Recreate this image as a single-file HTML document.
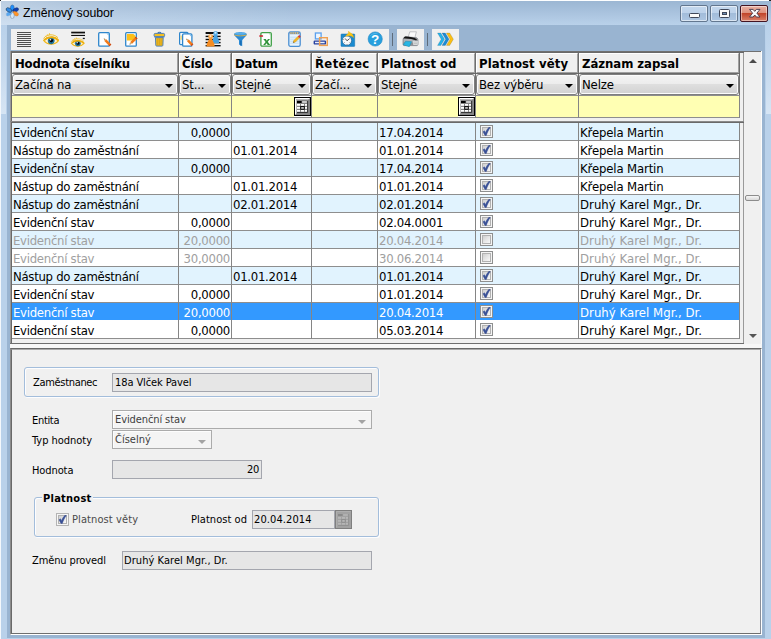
<!DOCTYPE html><html lang="cs"><head><meta charset="utf-8"><title>Změnový soubor</title><style>
*{box-sizing:border-box;margin:0;padding:0}
html,body{width:771px;height:639px;overflow:hidden}
body{position:relative;background:#b9d1ea;font-family:"DejaVu Sans Condensed", "Liberation Sans", sans-serif;font-size:13px;color:#000;line-height:1}
.a{position:absolute}
.t{position:absolute;white-space:nowrap}
#client{left:7px;top:25px;width:758px;height:613px;background:#99b4d1}
#title{left:0;top:0;width:771px;height:25px;background:linear-gradient(to right,rgba(255,255,255,.32) 0,rgba(255,255,255,.12) 120px,rgba(255,255,255,0) 300px),linear-gradient(#9ab5d2 0,#a3bdd9 30%,#b9d1ea 100%)}
#topw{left:0;top:0;width:771px;height:1px;background:#fdfeff}
#leftw{left:0;top:0;width:1px;height:639px;background:#f4f8fc}
#fl{left:1px;top:25px;width:6px;height:614px;background:#b9d1ea}
#fr{left:765px;top:25px;width:6px;height:614px;background:#b9d1ea}
#fb{left:0;top:638px;width:771px;height:1px;background:#b9d1ea}
#ttl{left:23px;top:6px;font-family:"Liberation Sans","DejaVu Sans",sans-serif;font-size:12.3px;line-height:15px;color:#000;letter-spacing:-.05px}
.cb{top:5px;height:17px;border:1px solid #63778f;border-radius:2px;background:linear-gradient(#c3d7ed 0,#bdd2ea 48%,#a2bcda 50%,#adc6e2 100%);box-shadow:inset 0 0 0 1px rgba(255,255,255,.55)}
#cbx{border-color:#431422;background:linear-gradient(#e9b1a3 0,#dd8f7b 48%,#c2452a 50%,#d98069 100%);box-shadow:inset 0 0 0 1px rgba(255,255,255,.45)}
.tb{top:29px;height:21px;background:#f0f0f0}
.tsep{top:33px;width:1px;height:13px;background:#5f6c7a}
.ico{position:absolute;top:31px;width:16px;height:16px}
/* grid */
.pn{background:#f0f0f0}
.hc{top:53px;height:20px;background:#f0f0f0;border-left:1px solid #fff;border-top:1px solid #fff;border-right:1px solid #a0a0a0;border-bottom:1px solid #a0a0a0}
.hc span{position:absolute;left:2px;top:2px;font-weight:bold;font-size:13px;line-height:16px;white-space:nowrap;letter-spacing:-.2px}
.fc{top:74px;height:21px;border:1px solid #7f7f7f;border-radius:3px;background:linear-gradient(#f4f4f4 0,#ececec 47%,#dedede 50%,#d2d2d2 100%);box-shadow:inset 0 0 0 1px #fcfcfc}
.fc span{position:absolute;left:2px;top:2px;font-size:13px;line-height:16px;white-space:nowrap;letter-spacing:-.15px}
.fc i{position:absolute;right:4px;top:9px;width:0;height:0;border-left:4px solid transparent;border-right:4px solid transparent;border-top:4px solid #000}
.yc{top:96px;height:21px;background:#ffffb3}
.vl{width:1px;background:#858585}
.hl{height:1px;background:#8e8e8e}
.row{left:12px;width:727px;height:17px}
.row span{position:absolute;top:1px;font-size:13px;line-height:17px;white-space:nowrap;letter-spacing:-.28px}
.alt{background:#e1f3fe}
.sel{background:#3399ff;color:#fff}
.dis{color:#a0a0a0}
.ck{position:absolute;left:468px;top:2px;width:13px;height:13px;border:1px solid #8e8f8f;background:#f4f4f4}
.ck b{position:absolute;left:1px;top:1px;width:9px;height:9px;border:1px solid #b2b2b2;background:linear-gradient(135deg,#cfcfcf 0,#e6e6e6 50%,#f8f8f8 100%)}
.ck svg{position:absolute;left:1px;top:1px;width:9px;height:9px}
/* bottom */
.lb{font-family:"DejaVu Sans Condensed", "Liberation Sans", sans-serif;font-size:11px;line-height:13px;letter-spacing:-.32px}
.fld{height:19px;border:1px solid #a4a6ae;background:#e6e6e6}
.fld span,.cmb span{position:absolute;left:3px;top:2px;font-size:11px;line-height:13px;white-space:nowrap;letter-spacing:-.32px}
.cmb span{top:2px}
.cmb{height:19px;border:1px solid #ababab;background:#f4f4f4;color:#404040;box-shadow:inset 1px 1px 0 #fdfdfd}
.cmb i{position:absolute;right:5px;top:9px;width:0;height:0;border-left:4px solid transparent;border-right:4px solid transparent;border-top:4px solid #a3a3a3}
.gb{border:1px solid #a3bddb;border-radius:3px;box-shadow:inset 1px 1px 0 #fdfdfe, 1px 1px 0 #fdfdfe}
</style></head><body>
<div class="a" id="title"></div><div class="a" id="client"></div>
<div class="a" id="fl"></div><div class="a" id="fr"></div><div class="a" id="fb"></div>
<div class="a" style="left:1px;top:25px;width:5px;height:89px;background:linear-gradient(#b9d1ea 0,#c4d8ed 45%,#d6e5f4 100%)"></div><div class="a" style="left:766px;top:25px;width:5px;height:89px;background:linear-gradient(#b9d1ea 0,#c4d8ed 45%,#d6e5f4 100%)"></div>
<div class="a" id="topw"></div><div class="a" id="leftw"></div>
<div class="a" style="left:0;top:0;width:1px;height:1px;background:#222"></div><div class="a" style="left:769px;top:0;width:2px;height:1px;background:#222"></div>
<svg class="a" style="left:5px;top:4px" width="15" height="15" viewBox="0 0 15 15">
<g transform="translate(7.3,7.8)">
<ellipse cx="0" cy="-3.8" rx="1.9" ry="3.1" fill="#1e90ff" stroke="#3a5f8a" stroke-width=".5"/>
<ellipse cx="0" cy="-3.8" rx="1.9" ry="3.1" fill="#0c3fb0" stroke="#1b2f6a" stroke-width=".5" transform="rotate(62)"/>
<ellipse cx="0" cy="-3.8" rx="1.9" ry="3.1" fill="#ff9326" stroke="#c77a30" stroke-width=".4" transform="rotate(120)"/>
<ellipse cx="0" cy="-3.8" rx="1.9" ry="3.1" fill="#d4e9fb" stroke="#6d7f92" stroke-width=".5" transform="rotate(180)"/>
<ellipse cx="0" cy="-3.8" rx="1.9" ry="3.1" fill="#5aa8f0" stroke="#8fb2d8" stroke-width=".4" transform="rotate(240)"/>
<ellipse cx="0" cy="-3.8" rx="1.9" ry="3.1" fill="#2f8ae6" stroke="#23405f" stroke-width=".6" transform="rotate(298)"/>
</g></svg>
<div class="t" id="ttl">Změnový soubor</div>
<div class="a cb" style="left:680px;width:28px"><svg class="a" style="left:8px;top:7px" width="11" height="5"><rect x=".5" y=".5" width="10" height="4" rx="1" fill="#fbfbfb" stroke="#40485a"/></svg></div>
<div class="a cb" style="left:710px;width:28px"><svg class="a" style="left:8px;top:3px" width="11" height="9"><rect x=".5" y=".5" width="10" height="8" rx="1" fill="#fbfbfb" stroke="#40485a"/><rect x="3.5" y="3.5" width="4" height="2" fill="#6f8db3" stroke="#40485a"/></svg></div>
<div class="a cb" id="cbx" style="left:740px;width:28px"><svg class="a" style="left:7px;top:2px" width="13" height="11" viewBox="0 0 13 11"><path d="M1.5 1.400H5.100L6.750 3.400 8.400 1.400H12L8.900 5.200 12 9H8.400L6.750 7 5.100 9H1.500L4.600 5.200z" fill="#fafafa" stroke="#43384a" stroke-width=".9" stroke-linejoin="round"/></svg></div>
<div class="a tb" style="left:11px;width:378px"></div><div class="a tb" style="left:397px;width:27px"></div><div class="a tb" style="left:432px;width:27px"></div>
<div class="a tsep" style="left:392px"></div><div class="a tsep" style="left:427px"></div>
<svg class="ico" style="left:16px" viewBox="0 0 16 16"><rect x="1" y="1" width="14" height="1" fill="#4f4f4f"/><rect x="1" y="3" width="14" height="1" fill="#4f4f4f"/><rect x="1" y="5" width="14" height="1" fill="#4f4f4f"/><rect x="1" y="7" width="14" height="1" fill="#4f4f4f"/><rect x="1" y="9" width="14" height="1" fill="#4f4f4f"/><rect x="1" y="11" width="14" height="1" fill="#4f4f4f"/><rect x="1" y="13" width="14" height="1" fill="#4f4f4f"/><rect x="1" y="15" width="14" height="1" fill="#4f4f4f"/></svg>
<svg class="ico" style="left:43px" viewBox="0 0 16 16"><path d="M0.700 9.400C3 7 6 6.200 8.600 6.400c3 .2 5.400 1.400 6.900 3.200-2 2.400-4.500 3.600-7.100 3.600-3.200 0-5.900-1.300-7.700-3.800z" fill="#fbf3d8" stroke="#efb71a" stroke-width="1.200"/>
<path d="M0.500 7.500C2.500 4.500 6 3.300 9.500 3.900c2.400.4 4.300 1.500 5.500 2.900" fill="none" stroke="#f3c234" stroke-width="1"/>
<path d="M2.500 4.900l1.100 1.700M4.300 3.400l.9 1.900M6.400 2.200l.3 2.100" fill="none" stroke="#f1bd2a" stroke-width=".9"/>
<circle cx="8.200" cy="9.800" r="3.100" fill="#1d7fac"/><circle cx="8.200" cy="9.800" r="3.100" fill="none" stroke="#14597c" stroke-width=".6"/>
<circle cx="8.300" cy="9.600" r="1.800" fill="#07070c"/><circle cx="7.500" cy="8.700" r=".8" fill="#fff"/>
<path d="M1.300 8.900C4 6.600 7 6 9.400 6.300c2.400.3 4.300 1.400 5.800 3" fill="none" stroke="#efb00e" stroke-width="2"/></svg>
<svg class="ico" style="left:70px" viewBox="0 0 16 16"><rect x="1.200" y="0.700" width="13.800" height="1.700" fill="#111"/><rect x="1.200" y="3.900" width="13.800" height="1.100" fill="#111"/><rect x="12.800" y="6.800" width="2" height="1.300" fill="#222"/><g transform="translate(.8,4.700) scale(.86,.8)"><path d="M0.700 9.400C3 7 6 6.200 8.600 6.400c3 .2 5.400 1.400 6.900 3.200-2 2.400-4.500 3.600-7.100 3.600-3.200 0-5.900-1.300-7.700-3.800z" fill="#fbf3d8" stroke="#efb71a" stroke-width="1.200"/>
<path d="M0.500 7.500C2.500 4.500 6 3.300 9.500 3.900c2.400.4 4.300 1.500 5.500 2.900" fill="none" stroke="#f3c234" stroke-width="1"/>
<path d="M2.500 4.900l1.100 1.700M4.300 3.400l.9 1.900M6.400 2.200l.3 2.100" fill="none" stroke="#f1bd2a" stroke-width=".9"/>
<circle cx="8.200" cy="9.800" r="3.100" fill="#1d7fac"/><circle cx="8.200" cy="9.800" r="3.100" fill="none" stroke="#14597c" stroke-width=".6"/>
<circle cx="8.300" cy="9.600" r="1.800" fill="#07070c"/><circle cx="7.500" cy="8.700" r=".8" fill="#fff"/>
<path d="M1.300 8.900C4 6.600 7 6 9.400 6.300c2.400.3 4.300 1.400 5.800 3" fill="none" stroke="#efb00e" stroke-width="2"/></g></svg>
<svg class="ico" style="left:97px" viewBox="0 0 16 16"><rect x="1.700" y="1.700" width="10.600" height="13.500" rx="1" fill="#fff" stroke="#2f86cc" stroke-width="1.300"/><path d="M9.400 2.400h2.200v2.200z" fill="#79bdf0"/><path d="M9.27 8.27 L14.33 13.49 L12.47 15.31 L7.40 10.08 z" fill="#f27a1a"/><path d="M6.80 7.60 L9.27 8.27 L7.40 10.08 z" fill="#d9b27a"/><path d="M6.80 7.60 L7.80 7.88 L7.05 8.61 z" fill="#3a2a20"/><path d="M13.50 12.63 L14.33 13.49 L12.47 15.31 L11.63 14.44 z" fill="#c8451a"/></svg>
<svg class="ico" style="left:124px" viewBox="0 0 16 16"><rect x="1.700" y="1.700" width="10.600" height="13.500" rx="1" fill="#fff" stroke="#2f86cc" stroke-width="1.300"/><path d="M2.900 2.900h6.600l2 2v4.700H2.900z" fill="#fbc01c"/><path d="M9.600 2.400h2v2.200z" fill="#bfe0f8"/><path d="M6.27 10.93 L11.69 5.67 L13.51 7.53 L8.08 12.80 z" fill="#f27a1a"/><path d="M5.60 13.40 L6.27 10.93 L8.08 12.80 z" fill="#d9b27a"/><path d="M5.60 13.40 L5.88 12.40 L6.61 13.15 z" fill="#3a2a20"/><path d="M10.83 6.50 L11.69 5.67 L13.51 7.53 L12.65 8.37 z" fill="#c8451a"/></svg>
<svg class="ico" style="left:151px" viewBox="0 0 16 16"><path d="M6.900 2.200c.2-1.300 2.800-1.300 3 0" fill="none" stroke="#3f76b5" stroke-width="1.100"/><rect x="3.100" y="2.400" width="10.500" height="3.300" rx="1.100" fill="#f6c01f" stroke="#3f76b5" stroke-width=".9"/><rect x="3.300" y="5.400" width="10.100" height="1.100" fill="#4a7fc0"/><path d="M4.500 6.700h7.700l-.3 7.600c0 .5-.4.800-.9.800H5.700c-.5 0-.9-.3-.9-.8z" fill="#f3bb1e" stroke="#3f76b5" stroke-width=".9" stroke-linejoin="round"/><path d="M6.700 7.400v6.800M8.400 7.400v6.800M10.100 7.400v6.800" stroke="#cf9d1c" stroke-width=".8"/></svg>
<svg class="ico" style="left:178px" viewBox="0 0 16 16"><rect x="1.600" y="1.400" width="8.400" height="12.200" rx="1" fill="#f3f9fe" stroke="#2f86cc" stroke-width="1.200"/><rect x="2.500" y="4.600" width="1.200" height="4.200" fill="#f7d35a"/><rect x="4.600" y="2.900" width="9.300" height="12.200" rx="1.200" fill="#fff" stroke="#2f86cc" stroke-width="1.300"/><path d="M11.200 3.600h2v2.200z" fill="#79bdf0"/><path d="M10.82 8.55 L15.31 13.35 L13.49 15.05 L8.99 10.26 z" fill="#f27a1a"/><path d="M8.40 7.80 L10.82 8.55 L8.99 10.26 z" fill="#d9b27a"/><path d="M8.40 7.80 L9.38 8.11 L8.65 8.80 z" fill="#3a2a20"/><path d="M14.49 12.47 L15.31 13.35 L13.49 15.05 L12.67 14.18 z" fill="#c8451a"/></svg>
<svg class="ico" style="left:205px" viewBox="0 0 16 16"><rect x=".6" y="1" width="15" height="2" fill="#0c0c0c"/><rect x=".6" y="4.7" width="15" height="1.400" fill="#0c0c0c"/><rect x=".6" y="7.8" width="15" height="1.400" fill="#0c0c0c"/><rect x=".6" y="10.9" width="15" height="1.400" fill="#0c0c0c"/><rect x=".6" y="14" width="15" height="1.400" fill="#0c0c0c"/><circle cx="10.600" cy="2.400" r="2.300" fill="#5ab0e8"/><path d="M9.100 4C9.100 6 7.400 8 7.300 12.200h6.900C14.200 8 12.100 6 12.100 4z" fill="#4aa3e0"/><circle cx="10.500" cy="1.800" r="1" fill="#d6ecfa"/><circle cx="5.600" cy="5.700" r="2.400" fill="#f9a03a"/><path d="M4.100 7.400C4.100 9.400 1.600 11.400 1.500 15.400h8.200C9.600 11.400 7.100 9.400 7.100 7.400z" fill="#f68d22"/><circle cx="5.500" cy="5.100" r="1.100" fill="#fee6c8"/></svg>
<svg class="ico" style="left:232px" viewBox="0 0 16 16"><path d="M2 3.200c0-1.300 2.900-2 6.400-2s6.400.7 6.400 2c0 1.500-3.900 4.700-4.600 6.200v5.800l-3.200-1.600V9.400C6.200 7.900 2 4.700 2 3.200z" fill="#2b8ad6"/><ellipse cx="8.400" cy="2.700" rx="5.600" ry="1.100" fill="#58b0ec"/><path d="M2.300 3.900c2.200 1.300 10 1.300 12.200 0" fill="none" stroke="#d8b04a" stroke-width="1"/><path d="M8.800 9.600v5" stroke="#1b6db4" stroke-width="1.500"/></svg>
<svg class="ico" style="left:259px" viewBox="0 0 16 16"><rect x="1.900" y="1.600" width="10.400" height="13.600" rx="1.200" fill="#fff" stroke="#3fa047" stroke-width="1.300"/><path d="M9.600 2.300h2v2.200z" fill="#9ad3a0"/><path d="M4.300 8h2.500l1 1.700 1.200-1.700h2l-2.200 2.800 2.400 3.300h-2.500l-1.100-1.900-1.400 1.900h-2l2.400-3.200z" fill="#2f9239"/><rect x=".3" y="4.200" width="3.800" height="1.600" rx=".4" fill="#cf1f2a"/></svg>
<svg class="ico" style="left:286px" viewBox="0 0 16 16"><rect x="2.800" y=".9" width="11.400" height="14.400" rx="1.600" fill="#e8f4fd" stroke="#4a8fd2" stroke-width="1.300"/><rect x="3.600" y="1.200" width="9.800" height="2" fill="#7b8da8"/><path d="M5 1.300v1.600M7.200 1.300v1.600M9.400 1.300v1.600M11.600 1.300v1.600" stroke="#f1d36a" stroke-width=".9"/><path d="M4.200 6.200h8.600M4.200 8.200h8.600M4.200 10.200h8.600M4.200 12.200h8.600" stroke="#b3d8f5" stroke-width=".8"/><path d="M7.200 11.700l.6-2.200 4-4 1.600 1.600-4 4z" fill="#f7b81e" stroke="#c98a12" stroke-width=".4"/><path d="M11.800 5.500l.9-.9c.4-.4.900-.3 1.200 0l.5.500c.3.300.3.800 0 1.100l-.9.900z" fill="#d63a33"/><path d="M7.200 11.700l.4-1.300.9.900z" fill="#3b3b3b"/></svg>
<svg class="ico" style="left:313px" viewBox="0 0 16 16"><rect x="2.400" y="2" width="5.700" height="5.900" fill="#eef6fe" stroke="#5aa0ee" stroke-width="1.300"/><rect x="1.300" y="10.100" width="11.100" height="2.800" rx=".5" fill="#e9eefa" stroke="#2741a0" stroke-width="1.400"/><rect x="6.600" y="6.700" width="7.700" height="7.700" fill="none" stroke="#f0a050" stroke-width="1.400"/></svg>
<svg class="ico" style="left:340px" viewBox="0 0 16 16"><rect x="1" y="3" width="13.700" height="12.400" rx=".6" fill="#1b8bd0" stroke="#1672ae" stroke-width=".5"/><circle cx="6.900" cy="9.600" r="4.700" fill="#f7f9fb" stroke="#1a5f90" stroke-width=".7"/><path d="M7 9.800l-1.800-2.300M7 9.800l2.600-2.200" stroke="#333" stroke-width=".8" fill="none"/><path d="M3.200 8.400l1 .2M7 13v.9M4 11.900l.7-.5M10.200 12l-.6-.6" stroke="#555" stroke-width=".6"/><path d="M5.400 5.300c.8-1.500 2-2.400 3-2.900l.1-2.300 1.700 1.700c1.900.5 3.400 2.500 3.600 5.300-.9-1.300-2-2-3.300-2.200-1.900-.2-3.500.1-5.100.4z" fill="#fcc512" stroke="#dba414" stroke-width=".3"/></svg>
<svg class="ico" style="left:367px" viewBox="0 0 16 16"><circle cx="8.200" cy="8" r="7.100" fill="#27a0de"/><path d="M2.400 5.600a6.300 6.300 0 0 1 9-2.800c-3.500-.4-6.500.7-9 2.800z" fill="#5bbcec" opacity=".8"/><circle cx="8.200" cy="8" r="7.100" fill="none" stroke="#1c86c6" stroke-width=".6"/><text x="8.200" y="12.600" text-anchor="middle" font-family="Liberation Sans,DejaVu Sans,sans-serif" font-weight="bold" font-size="13.500" fill="#fff">?</text></svg>
<svg class="ico" style="left:402px;width:17px" viewBox="0 0 17 16"><path d="M6 6.600L7.800 .8h6.600l-1.600 6z" fill="#fbfbfb" stroke="#9da1a6" stroke-width=".6"/><path d="M1 9.200c0-1.900 1-3.200 2.600-3.400l10.200.8c1.400.2 2.200 1.200 2.200 2.600v3.900c0 .9-.6 1.500-1.400 1.500H2.400c-.9 0-1.400-.6-1.400-1.500z" fill="#aeb2b7" stroke="#666a70" stroke-width=".6"/><path d="M1.500 7.500c.5-1.400 1.300-2 2.700-2 3.600 0 7.700.9 10.700 2.500l-.5 1.500C11 8.100 6.300 7.300 1.500 7.500z" fill="#141414"/><path d="M1.200 11.500h14.600v1.700c0 .9-.6 1.400-1.400 1.400H2.600c-.9 0-1.400-.5-1.400-1.400z" fill="#8b8f95"/><path d="M11.200 10h4.500v3.800h-4.500z" fill="#eceded"/><path d="M11.700 11h3.500M11.700 12.400h3.500" stroke="#9a9da1" stroke-width=".6"/><path d="M3.600 10.200l6 .5-2.300 5-6-1.900z" fill="#27b5e3" stroke="#1688b0" stroke-width=".5"/></svg>
<svg class="ico" style="left:437px;width:17px" viewBox="0 0 17 16"><path d="M0.5 2h3.300l3.700 6.200-3.700 6.200h-3.300l3.700-6.200z" fill="#25b3ea" stroke="rgba(40,60,80,.35)" stroke-width=".5"/><path d="M5 2h3.300l3.700 6.200-3.700 6.200h-3.300l3.700-6.200z" fill="#1d8cd6" stroke="rgba(40,60,80,.35)" stroke-width=".5"/><path d="M9.4 2h3.300l3.700 6.200-3.700 6.200h-3.300l3.700-6.200z" fill="#fcbf12" stroke="rgba(40,60,80,.35)" stroke-width=".5"/></svg>
<div class="a pn" style="left:10px;top:51px;width:734px;height:71px"></div>
<div class="a" style="left:10px;top:51px;width:751px;height:1px;background:#707070"></div><div class="a" style="left:10px;top:52px;width:734px;height:1px;background:#696969"></div>
<div class="a" style="left:10px;top:51px;width:1px;height:293px;background:#9a9a9a"></div><div class="a" style="left:11px;top:52px;width:1px;height:292px;background:#696969"></div>
<div class="a hc" style="left:12px;width:166px"><span>Hodnota číselníku</span></div>
<div class="a hc" style="left:179px;width:52px"><span>Číslo</span></div>
<div class="a hc" style="left:232px;width:79px"><span>Datum</span></div>
<div class="a hc" style="left:312px;width:65px"><span style="letter-spacing:.35px">Řetězec</span></div>
<div class="a hc" style="left:378px;width:97px"><span style="letter-spacing:0">Platnost od</span></div>
<div class="a hc" style="left:476px;width:102px"><span style="letter-spacing:.1px">Platnost věty</span></div>
<div class="a hc" style="left:579px;width:160px"><span style="letter-spacing:-.05px">Záznam zapsal</span></div>
<div class="a" style="left:178px;top:53px;width:1px;height:42px;background:#6e6e6e"></div>
<div class="a" style="left:231px;top:53px;width:1px;height:42px;background:#6e6e6e"></div>
<div class="a" style="left:311px;top:53px;width:1px;height:42px;background:#6e6e6e"></div>
<div class="a" style="left:377px;top:53px;width:1px;height:42px;background:#6e6e6e"></div>
<div class="a" style="left:475px;top:53px;width:1px;height:42px;background:#6e6e6e"></div>
<div class="a" style="left:578px;top:53px;width:1px;height:42px;background:#6e6e6e"></div>
<div class="a" style="left:739px;top:53px;width:1px;height:42px;background:#6e6e6e"></div>
<div class="a" style="left:12px;top:73px;width:728px;height:1px;background:#696969"></div>
<div class="a fc" style="left:12px;width:166px"><span>Začíná na</span><i></i></div>
<div class="a fc" style="left:179px;width:52px"><span>St...</span><i></i></div>
<div class="a fc" style="left:232px;width:79px"><span>Stejné</span><i></i></div>
<div class="a fc" style="left:312px;width:65px"><span>Začí...</span><i></i></div>
<div class="a fc" style="left:378px;width:97px"><span>Stejné</span><i></i></div>
<div class="a fc" style="left:476px;width:102px"><span>Bez výběru</span><i></i></div>
<div class="a fc" style="left:579px;width:160px"><span>Nelze</span><i></i></div>
<div class="a hl" style="left:12px;top:95px;width:728px"></div>
<div class="a yc" style="left:12px;width:727px"></div>
<div class="a hl" style="left:12px;top:117px;width:728px"></div>
<div class="a vl" style="left:178px;top:95px;height:23px"></div>
<div class="a vl" style="left:231px;top:95px;height:23px"></div>
<div class="a vl" style="left:311px;top:95px;height:23px"></div>
<div class="a vl" style="left:377px;top:95px;height:23px"></div>
<div class="a vl" style="left:475px;top:95px;height:23px"></div>
<div class="a vl" style="left:578px;top:95px;height:23px"></div>
<div class="a vl" style="left:739px;top:95px;height:23px"></div>
<svg class="a" style="left:294px;top:96px" width="17" height="21" viewBox="0 0 17 21"><rect width="17" height="21" fill="#fff"/><rect x=".5" y="1.500" width="16" height="18" fill="#858585" stroke="#000"/><path d="M1.500 18.500V2.500H15.500" fill="none" stroke="#fff"/><path d="M2.500 17.500V3.500H14.500" fill="none" stroke="#d8d8d8" stroke-width=".6"/><rect x="3" y="5" width="4.600" height="2" fill="#000"/><rect x="8.200" y="5" width="4.600" height="2" fill="#c9c9c9"/><g fill="#fff"><rect x="3" y="8" width="3" height="1.800"/><rect x="7" y="8" width="3" height="1.800"/><rect x="11" y="8" width="2" height="1.800"/><rect x="3" y="11" width="3" height="1.800"/><rect x="11" y="11" width="2" height="1.800"/><rect x="3" y="14" width="3" height="1.700"/><rect x="7" y="14" width="3" height="1.700"/><rect x="11" y="14" width="2" height="1.700"/></g><rect x="6.700" y="10.500" width="3.600" height="2.800" fill="#bdbdbd" stroke="#000" stroke-width=".9"/><path d="M13.600 5v11.500H3" fill="none" stroke="#222" stroke-width=".8"/></svg>
<svg class="a" style="left:458px;top:96px" width="17" height="21" viewBox="0 0 17 21"><rect width="17" height="21" fill="#fff"/><rect x=".5" y="1.500" width="16" height="18" fill="#858585" stroke="#000"/><path d="M1.500 18.500V2.500H15.500" fill="none" stroke="#fff"/><path d="M2.500 17.500V3.500H14.500" fill="none" stroke="#d8d8d8" stroke-width=".6"/><rect x="3" y="5" width="4.600" height="2" fill="#000"/><rect x="8.200" y="5" width="4.600" height="2" fill="#c9c9c9"/><g fill="#fff"><rect x="3" y="8" width="3" height="1.800"/><rect x="7" y="8" width="3" height="1.800"/><rect x="11" y="8" width="2" height="1.800"/><rect x="3" y="11" width="3" height="1.800"/><rect x="11" y="11" width="2" height="1.800"/><rect x="3" y="14" width="3" height="1.700"/><rect x="7" y="14" width="3" height="1.700"/><rect x="11" y="14" width="2" height="1.700"/></g><rect x="6.700" y="10.500" width="3.600" height="2.800" fill="#bdbdbd" stroke="#000" stroke-width=".9"/><path d="M13.600 5v11.500H3" fill="none" stroke="#222" stroke-width=".8"/></svg>
<div class="a" style="left:743px;top:53px;width:1px;height:291px;background:#9a9a9a"></div>
<div class="a" style="left:10px;top:121px;width:734px;height:1px;background:#8a8a8a"></div><div class="a" style="left:11px;top:122px;width:733px;height:1px;background:#696969"></div>
<div class="a pn" style="left:12px;top:123px;width:731px;height:220px"></div>
<div class="a" style="left:12px;top:123px;width:727px;height:215px;background:#fff"></div>
<div class="a row alt" style="top:123px"><span style="left:1px">Evidenční stav</span><span style="right:509px">0,0000</span><span style="left:367px">17.04.2014</span><div class="ck"><b></b><svg viewBox="0 0 9 9"><path d="M1 4.700l1.500-.9 1 1.900C4.400 3.500 5.600 1.600 7.200.1l1.100.6C6.600 2.700 5.300 5.200 4.300 8.400H3z" fill="#3a5196" stroke="#3a5196" stroke-width=".5" stroke-linejoin="round"/></svg></div><span style="left:568px;letter-spacing:-.14px">Křepela Martin</span></div>
<div class="a hl" style="left:12px;top:140px;width:727px"></div>
<div class="a row" style="top:141px"><span style="left:1px">Nástup do zaměstnání</span><span style="left:221px">01.01.2014</span><span style="left:367px">01.01.2014</span><div class="ck"><b></b><svg viewBox="0 0 9 9"><path d="M1 4.700l1.500-.9 1 1.900C4.400 3.500 5.600 1.600 7.200.1l1.100.6C6.600 2.700 5.300 5.200 4.300 8.400H3z" fill="#3a5196" stroke="#3a5196" stroke-width=".5" stroke-linejoin="round"/></svg></div><span style="left:568px;letter-spacing:-.14px">Křepela Martin</span></div>
<div class="a hl" style="left:12px;top:158px;width:727px"></div>
<div class="a row alt" style="top:159px"><span style="left:1px">Evidenční stav</span><span style="right:509px">0,0000</span><span style="left:367px">17.04.2014</span><div class="ck"><b></b><svg viewBox="0 0 9 9"><path d="M1 4.700l1.500-.9 1 1.900C4.400 3.500 5.600 1.600 7.200.1l1.100.6C6.600 2.700 5.300 5.200 4.300 8.400H3z" fill="#3a5196" stroke="#3a5196" stroke-width=".5" stroke-linejoin="round"/></svg></div><span style="left:568px;letter-spacing:-.14px">Křepela Martin</span></div>
<div class="a hl" style="left:12px;top:176px;width:727px"></div>
<div class="a row" style="top:177px"><span style="left:1px">Nástup do zaměstnání</span><span style="left:221px">01.01.2014</span><span style="left:367px">01.01.2014</span><div class="ck"><b></b><svg viewBox="0 0 9 9"><path d="M1 4.700l1.500-.9 1 1.900C4.400 3.500 5.600 1.600 7.200.1l1.100.6C6.600 2.700 5.300 5.200 4.300 8.400H3z" fill="#3a5196" stroke="#3a5196" stroke-width=".5" stroke-linejoin="round"/></svg></div><span style="left:568px;letter-spacing:-.14px">Křepela Martin</span></div>
<div class="a hl" style="left:12px;top:194px;width:727px"></div>
<div class="a row alt" style="top:195px"><span style="left:1px">Nástup do zaměstnání</span><span style="left:221px">02.01.2014</span><span style="left:367px">02.01.2014</span><div class="ck"><b></b><svg viewBox="0 0 9 9"><path d="M1 4.700l1.500-.9 1 1.900C4.400 3.500 5.600 1.600 7.200.1l1.100.6C6.600 2.700 5.300 5.200 4.300 8.400H3z" fill="#3a5196" stroke="#3a5196" stroke-width=".5" stroke-linejoin="round"/></svg></div><span style="left:568px;letter-spacing:.04px">Druhý Karel Mgr., Dr.</span></div>
<div class="a hl" style="left:12px;top:212px;width:727px"></div>
<div class="a row" style="top:213px"><span style="left:1px">Evidenční stav</span><span style="right:509px">0,0000</span><span style="left:367px">02.04.0001</span><div class="ck"><b></b><svg viewBox="0 0 9 9"><path d="M1 4.700l1.500-.9 1 1.900C4.400 3.500 5.600 1.600 7.200.1l1.100.6C6.600 2.700 5.300 5.200 4.300 8.400H3z" fill="#3a5196" stroke="#3a5196" stroke-width=".5" stroke-linejoin="round"/></svg></div><span style="left:568px;letter-spacing:.04px">Druhý Karel Mgr., Dr.</span></div>
<div class="a hl" style="left:12px;top:230px;width:727px"></div>
<div class="a row alt dis" style="top:231px"><span style="left:1px">Evidenční stav</span><span style="right:509px">20,0000</span><span style="left:367px">20.04.2014</span><div class="ck"><b></b></div><span style="left:568px;letter-spacing:.04px">Druhý Karel Mgr., Dr.</span></div>
<div class="a hl" style="left:12px;top:248px;width:727px"></div>
<div class="a row dis" style="top:249px"><span style="left:1px">Evidenční stav</span><span style="right:509px">30,0000</span><span style="left:367px">30.06.2014</span><div class="ck"><b></b></div><span style="left:568px;letter-spacing:.04px">Druhý Karel Mgr., Dr.</span></div>
<div class="a hl" style="left:12px;top:266px;width:727px"></div>
<div class="a row alt" style="top:267px"><span style="left:1px">Nástup do zaměstnání</span><span style="left:221px">01.01.2014</span><span style="left:367px">01.01.2014</span><div class="ck"><b></b><svg viewBox="0 0 9 9"><path d="M1 4.700l1.500-.9 1 1.900C4.400 3.500 5.600 1.600 7.200.1l1.100.6C6.600 2.700 5.300 5.200 4.300 8.400H3z" fill="#3a5196" stroke="#3a5196" stroke-width=".5" stroke-linejoin="round"/></svg></div><span style="left:568px;letter-spacing:.04px">Druhý Karel Mgr., Dr.</span></div>
<div class="a hl" style="left:12px;top:284px;width:727px"></div>
<div class="a row" style="top:285px"><span style="left:1px">Evidenční stav</span><span style="right:509px">0,0000</span><span style="left:367px">01.01.2014</span><div class="ck"><b></b><svg viewBox="0 0 9 9"><path d="M1 4.700l1.500-.9 1 1.900C4.400 3.500 5.600 1.600 7.200.1l1.100.6C6.600 2.700 5.300 5.200 4.300 8.400H3z" fill="#3a5196" stroke="#3a5196" stroke-width=".5" stroke-linejoin="round"/></svg></div><span style="left:568px;letter-spacing:.04px">Druhý Karel Mgr., Dr.</span></div>
<div class="a hl" style="left:12px;top:302px;width:727px"></div>
<div class="a row sel" style="top:303px"><span style="left:1px">Evidenční stav</span><span style="right:509px">20,0000</span><span style="left:367px">20.04.2014</span><div class="ck"><b></b><svg viewBox="0 0 9 9"><path d="M1 4.700l1.500-.9 1 1.900C4.400 3.500 5.600 1.600 7.200.1l1.100.6C6.600 2.700 5.300 5.200 4.300 8.400H3z" fill="#3a5196" stroke="#3a5196" stroke-width=".5" stroke-linejoin="round"/></svg></div><span style="left:568px;letter-spacing:.04px">Druhý Karel Mgr., Dr.</span></div>
<div class="a row" style="top:321px"><span style="left:1px">Evidenční stav</span><span style="right:509px">0,0000</span><span style="left:367px">05.03.2014</span><div class="ck"><b></b><svg viewBox="0 0 9 9"><path d="M1 4.700l1.500-.9 1 1.900C4.400 3.500 5.600 1.600 7.200.1l1.100.6C6.600 2.700 5.300 5.200 4.300 8.400H3z" fill="#3a5196" stroke="#3a5196" stroke-width=".5" stroke-linejoin="round"/></svg></div><span style="left:568px;letter-spacing:.04px">Druhý Karel Mgr., Dr.</span></div>
<div class="a hl" style="left:12px;top:338px;width:728px"></div>
<div class="a vl" style="left:178px;top:123px;height:216px"></div>
<div class="a vl" style="left:231px;top:123px;height:216px"></div>
<div class="a vl" style="left:311px;top:123px;height:216px"></div>
<div class="a vl" style="left:377px;top:123px;height:216px"></div>
<div class="a vl" style="left:475px;top:123px;height:216px"></div>
<div class="a vl" style="left:578px;top:123px;height:216px"></div>
<div class="a vl" style="left:739px;top:123px;height:216px"></div>
<div class="a" style="left:10px;top:343px;width:734px;height:1px;background:#6e6e6e"></div>
<div class="a pn" style="left:744px;top:52px;width:17px;height:292px"></div><div class="a" style="left:761px;top:51px;width:1px;height:297px;background:#fcfcfc"></div>
<div class="a" style="left:749px;top:59px;width:0;height:0;border-left:4px solid transparent;border-right:4px solid transparent;border-bottom:4px solid #4a4a4a"></div>
<div class="a" style="left:749px;top:334px;width:0;height:0;border-left:4px solid transparent;border-right:4px solid transparent;border-top:4px solid #555"></div>
<div class="a" style="left:745px;top:195px;width:15px;height:6px;border:1px solid #8c8c8c;border-radius:2px;background:linear-gradient(#f6f6f6,#d8d8d8)"></div>
<div class="a" style="left:10px;top:344px;width:752px;height:4px;background:#f7f7f7"></div>
<div class="a pn" style="left:10px;top:348px;width:752px;height:287px;border-left:1px solid #8c8c8c;border-top:1px solid #686868;border-right:1px solid #fff;border-bottom:1px solid #fff"></div>
<div class="a" style="left:11px;top:349px;width:750px;height:285px;border-left:1px solid #696969;border-top:1px solid #a9a9a9;border-right:1px solid #8a8f99;border-bottom:1px solid #6e6e6e"></div>
<div class="a gb" style="left:24px;top:367px;width:355px;height:30px"></div>
<div class="t lb" style="left:33px;top:376px">Zaměstnanec</div>
<div class="a fld" style="left:112px;top:373px;width:260px"><span style="left:2px;letter-spacing:-.1px">18a Vlček Pavel</span></div>
<div class="t lb" style="left:32px;top:414px">Entita</div>
<div class="a cmb" style="left:112px;top:410px;width:260px"><span style="left:2px;letter-spacing:-.1px">Evidenční stav</span><i></i></div>
<div class="t lb" style="left:32px;top:434px;letter-spacing:-.02px">Typ hodnoty</div>
<div class="a cmb" style="left:112px;top:430px;width:100px"><span style="left:2px;top:2px;letter-spacing:0">Číselný</span><i></i></div>
<div class="t lb" style="left:32px;top:464px;letter-spacing:-.1px">Hodnota</div>
<div class="a fld" style="left:112px;top:460px;width:150px"><span style="left:auto;right:2px;top:2px">20</span></div>
<div class="a gb" style="left:34px;top:497px;width:345px;height:40px"></div>
<div class="t lb" style="left:42px;top:492px;font-weight:bold;letter-spacing:.25px;background:#f0f0f0;padding:0 1px 0 1px">Platnost</div>
<div class="a" style="left:56px;top:513px;width:13px;height:13px;border:1px solid #b4b4b4;background:#f6f6f6"><b class="a" style="left:1px;top:1px;width:9px;height:9px;border:1px solid #b2b2b2;background:linear-gradient(135deg,#cfcfcf 0,#e6e6e6 50%,#f8f8f8 100%)"></b><svg class="a" style="left:1px;top:1px" width="9" height="9" viewBox="0 0 9 9"><path d="M1 4.700l1.500-.9 1 1.900C4.400 3.500 5.600 1.600 7.200.1l1.100.6C6.600 2.700 5.300 5.200 4.300 8.400H3z" fill="#3a5196" stroke="#3a5196" stroke-width=".5" stroke-linejoin="round"/></svg></div>
<div class="t lb" style="left:72px;top:513px;color:#4a4a4a;letter-spacing:.1px">Platnost věty</div>
<div class="t lb" style="left:191px;top:513px;letter-spacing:.05px">Platnost od</div>
<div class="a fld" style="left:252px;top:510px;width:83px"><span style="left:1px;top:2px;letter-spacing:.1px">20.04.2014</span></div>
<svg class="a" style="left:335px;top:510px" width="17" height="19" viewBox="0 0 17 19"><rect x=".5" y=".5" width="16" height="18" fill="#a2a2a2" stroke="#7f7f7f"/><path d="M1.500 17.500V1.500H15.500" fill="none" stroke="#aeaeae"/><rect x="3" y="4" width="4.600" height="2" fill="#8a8a8a"/><rect x="8.200" y="4" width="4.600" height="2" fill="#b0b0b0"/><g fill="#b6b6b6"><rect x="3" y="7" width="3" height="1.800"/><rect x="7" y="7" width="3" height="1.800"/><rect x="11" y="7" width="2" height="1.800"/><rect x="3" y="10" width="3" height="1.800"/><rect x="7.300" y="10" width="2.400" height="1.800"/><rect x="11" y="10" width="2" height="1.800"/><rect x="3" y="13" width="3" height="1.700"/><rect x="7" y="13" width="3" height="1.700"/><rect x="11" y="13" width="2" height="1.700"/></g><rect x="6.700" y="9.500" width="3.600" height="2.800" fill="none" stroke="#8c8c8c" stroke-width=".8"/><path d="M13.600 4v11.500H3" fill="none" stroke="#8e8e8e" stroke-width=".8"/></svg>
<div class="t lb" style="left:32px;top:554px;letter-spacing:-.12px">Změnu provedl</div>
<div class="a fld" style="left:122px;top:551px;width:250px"><span style="left:1px;letter-spacing:.06px">Druhý Karel Mgr., Dr.</span></div>
</body></html>
